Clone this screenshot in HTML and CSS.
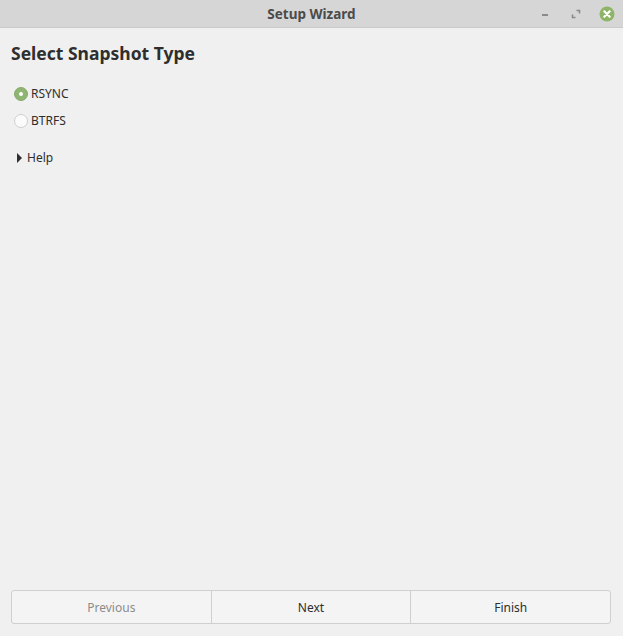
FILE: index.html
```html
<!DOCTYPE html>
<html>
<head>
<meta charset="utf-8">
<link rel="stylesheet" href="styles.css">
</head>
<body>
<div class="window">
  <div class="titlebar">
    <div class="title">Setup Wizard</div>
    <div class="controls">
      <span class="ctl min"><svg width="10" height="10" viewBox="0 0 10 10"><rect x="2" y="5" width="6" height="2" fill="#8a8a8a"/></svg></span>
      <span class="ctl max"><svg width="10" height="10" viewBox="0 0 10 10"><path d="M5.5 1.5h3v3M1.5 5.5v3h3" fill="none" stroke="#8a8a8a" stroke-width="1.6"/></svg></span>
      <span class="ctl close"><svg width="16" height="16" viewBox="0 0 16 16"><circle cx="8" cy="8" r="7.5" fill="#8eb468"/><path d="M5.3 5.3l5.4 5.4M10.7 5.3l-5.4 5.4" stroke="#fff" stroke-width="2.2" stroke-linecap="round"/></svg></span>
    </div>
  </div>
  <div class="content">
    <h1 class="heading">Select Snapshot Type</h1>
    <div class="radios">
      <label class="radio"><span class="dot on"></span>RSYNC</label>
      <label class="radio"><span class="dot"></span>BTRFS</label>
    </div>
    <div class="expander"><span class="arrow"></span>Help</div>
  </div>
  <div class="buttons">
    <div class="btn disabled">Previous</div>
    <div class="btn">Next</div>
    <div class="btn">Finish</div>
  </div>
</div>
</body>
</html>
```

FILE: styles.css
```css
html, body {
  margin: 0;
  padding: 0;
  width: 623px;
  height: 636px;
  overflow: hidden;
  background: #f0f0f0;
  font-family: "Noto Sans", "Open Sans", sans-serif;
}
.window {
  display: flex;
  flex-direction: column;
  height: 636px;
}
.titlebar {
  height: 28px;
  background: #d6d6d6;
  border-bottom: 1px solid #cacaca;
  box-sizing: border-box;
  position: relative;
  display: flex;
  align-items: center;
  justify-content: center;
}
.title {
  font-size: 13.5px;
  font-weight: bold;
  color: #4b4b4b;
}
.controls {
  position: absolute;
  right: 8px;
  top: 0;
  height: 28px;
  display: flex;
  align-items: center;
  gap: 15px;
}
.ctl {
  display: flex;
  align-items: center;
  justify-content: center;
  width: 16px;
  height: 16px;
}
.content {
  flex: 1;
  padding: 0 11px;
}
.heading {
  margin: 13px 0 0;
  font-size: 17.5px;
  font-weight: bold;
  color: #2e2e2e;
  line-height: 24px;
}
.radios {
  margin-top: 20px;
  display: flex;
  flex-direction: column;
  gap: 9px;
}
.radio {
  display: flex;
  align-items: center;
  font-size: 12px;
  color: #2e2e2e;
  line-height: 18px;
}
.dot {
  width: 14px;
  height: 14px;
  box-sizing: border-box;
  border-radius: 50%;
  border: 1px solid #cfcfcf;
  background: #fbfbfb;
  margin: 0 3px 0 3px;
  position: relative;
}
.dot.on {
  background: #8fb572;
  border-color: #86ab6a;
}
.dot.on::after {
  content: "";
  position: absolute;
  left: 4px;
  top: 4px;
  width: 4px;
  height: 4px;
  border-radius: 50%;
  background: #fff;
}
.expander {
  margin-top: 19px;
  display: flex;
  align-items: center;
  font-size: 12px;
  color: #2e2e2e;
  line-height: 18px;
}
.arrow {
  width: 0;
  height: 0;
  border-top: 5px solid transparent;
  border-bottom: 5px solid transparent;
  border-left: 5px solid #2e2e2e;
  margin: 0 5px 0 6px;
}
.buttons {
  display: flex;
  margin: 0 12px 12px 11px;
  height: 34px;
  border: 1px solid #cfcfcf;
  border-radius: 3px;
  box-sizing: border-box;
  background: #f4f4f4;
}
.btn {
  flex: 1;
  display: flex;
  align-items: center;
  justify-content: center;
  font-size: 12px;
  color: #2e2e2e;
  border-left: 1px solid #cfcfcf;
}
.btn:first-child {
  border-left: none;
}
.btn.disabled {
  color: #8c8c8c;
}
```
